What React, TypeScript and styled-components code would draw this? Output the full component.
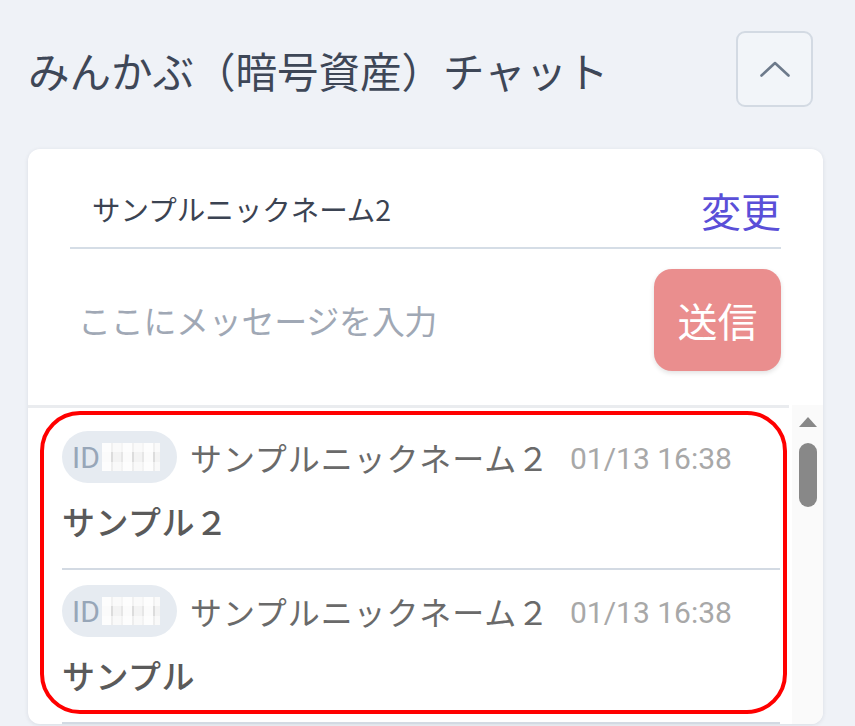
import React from "react";
import styled, { createGlobalStyle } from "styled-components";

const Global = createGlobalStyle`
  html, body { margin: 0; padding: 0; background: #eff2f7; overflow: hidden; }
  body { font-family: "Noto Sans CJK JP", "Noto Sans", sans-serif; }
`;

const Page = styled.div`
  padding: 31px 32px 0 28px;
  height: 726px;
  box-sizing: border-box;
`;

const Header = styled.div`
  display: flex;
  align-items: center;
  justify-content: space-between;
  height: 76px;
  padding-right: 10px;
`;

const Title = styled.h1`
  margin: 0;
  font-size: 41.5px;
  font-weight: 400;
  line-height: 1;
  color: #3e4757;
  padding-top: 4px;
`;

const CollapseButton = styled.button`
  width: 77px;
  height: 76px;
  box-sizing: border-box;
  border: 2px solid #d3dae3;
  border-radius: 9px;
  background: #f2f5f9;
  display: flex;
  align-items: center;
  justify-content: center;
  padding: 0;
`;

const Card = styled.div`
  margin-top: 42px;
  background: #ffffff;
  border-radius: 12px;
  box-shadow: 0 1px 4px rgba(30, 40, 60, 0.1);
  overflow: hidden;
`;

const NickRow = styled.div`
  display: flex;
  align-items: center;
  justify-content: space-between;
  height: 78px;
  padding: 20px 42px 0 42px;
`;

const NickName = styled.span`
  padding-left: 22px;
  font-size: 28.5px;
  color: #3b4352;
`;

const ChangeLink = styled.a`
  font-size: 40px;
  color: #5a4fd8;
  line-height: 1;
  margin-top: 4px;
`;

const Divider = styled.div`
  height: 2px;
  background: #d5dde6;
  margin: 0 42px;
`;

const InputRow = styled.div`
  display: flex;
  align-items: center;
  justify-content: space-between;
  margin: 0 42px;
  padding: 20px 0 34px 0;
`;

const Placeholder = styled.span`
  padding-left: 8px;
  font-size: 33px;
  color: #a0a8b5;
  letter-spacing: -0.3px;
`;

const SendButton = styled.button`
  width: 127px;
  height: 102px;
  border: none;
  border-radius: 18px;
  background: #ea8e8e;
  color: #ffffff;
  font-family: inherit;
  font-size: 40px;
  box-shadow: 0 2px 5px rgba(0, 0, 0, 0.12);
  padding: 0;
`;

const ListTopLine = styled.div`
  height: 3px;
  background: #eaecef;
  margin-right: 34px;
`;

const ListArea = styled.div`
  position: relative;
  display: flex;
`;

const Messages = styled.div`
  flex: 1;
  padding: 8px 12px 0 34px;
`;

const Item = styled.div`
  padding: 15px 0 25px 0;
  border-bottom: 2px solid #d3dae3;
`;

const ItemHeader = styled.div`
  display: flex;
  align-items: center;
  height: 52px;
`;

const IdBadge = styled.span`
  display: inline-flex;
  align-items: center;
  height: 52px;
  width: 115px;
  box-sizing: border-box;
  padding-left: 10px;
  border-radius: 26px;
  background: #e6ebf1;
  font-family: "Roboto", "Noto Sans", sans-serif;
  font-size: 30px;
  color: #97a6b8;
`;

const Masked = styled.span`
  display: inline-block;
  width: 58px;
  height: 28px;
  margin-left: 2px;
  background:
    linear-gradient(180deg, rgba(255,255,255,0.6) 0 9px, transparent 9px 19px, rgba(255,255,255,0.5) 19px),
    repeating-linear-gradient(90deg, #fbfbfb 0 9px, #dcdcdc 9px 11px, #f3f3f3 11px 19px, #e6e6e6 19px 21px);
`;

const Author = styled.span`
  margin-left: 13px;
  font-size: 32px;
  font-weight: 400;
  color: #6a6a6a;
  letter-spacing: 0.9px;
`;

const Time = styled.span`
  margin-left: 20px;
  font-family: "Roboto", "Noto Sans", sans-serif;
  font-size: 30px;
  color: #a8a8a8;
  padding-top: 2px;
`;

const Body = styled.div`
  margin-top: 16px;
  font-size: 33px;
  line-height: 44px;
  font-weight: 500;
  color: #5a5a5a;
  letter-spacing: 0.5px;
`;

const ScrollTrack = styled.div`
  width: 31px;
  background: #fafafa;
  display: flex;
  flex-direction: column;
  align-items: center;
  padding-top: 11px;
  margin-top: -3px;
`;

const Thumb = styled.div`
  margin-top: 15px;
  width: 18px;
  height: 64px;
  border-radius: 9px;
  background: #888888;
`;

const Highlight = styled.div`
  position: absolute;
  left: 12px;
  top: 3px;
  width: 747px;
  height: 303px;
  box-sizing: border-box;
  border: 4.5px solid #ff0000;
  border-radius: 40px;
  pointer-events: none;
`;

const messages = [
  { author: "サンプルニックネーム２", time: "01/13 16:38", text: "サンプル２" },
  { author: "サンプルニックネーム２", time: "01/13 16:38", text: "サンプル" },
];

export default function App() {
  return (
    <>
      <Global />
      <Page>
        <Header>
          <Title>みんかぶ（暗号資産）チャット</Title>
          <CollapseButton aria-label="折りたたむ">
            <svg width="30" height="16" viewBox="0 0 30 16">
              <polyline
                points="1.5,14.5 15,2 28.5,14.5"
                fill="none"
                stroke="#6d7a8b"
                strokeWidth="2.6"
                strokeLinecap="round"
                strokeLinejoin="round"
              />
            </svg>
          </CollapseButton>
        </Header>
        <Card>
          <NickRow>
            <NickName>サンプルニックネーム2</NickName>
            <ChangeLink>変更</ChangeLink>
          </NickRow>
          <Divider />
          <InputRow>
            <Placeholder>ここにメッセージを入力</Placeholder>
            <SendButton>送信</SendButton>
          </InputRow>
          <ListTopLine />
          <ListArea>
            <Messages>
              {messages.map((m, i) => (
                <Item key={i}>
                  <ItemHeader>
                    <IdBadge>
                      ID
                      <Masked />
                    </IdBadge>
                    <Author>{m.author}</Author>
                    <Time>{m.time}</Time>
                  </ItemHeader>
                  <Body>{m.text}</Body>
                </Item>
              ))}
            </Messages>
            <ScrollTrack>
              <svg width="20" height="12" viewBox="0 0 20 12">
                <path d="M10 1 L19 11 L1 11 Z" fill="#888888" />
              </svg>
              <Thumb />
            </ScrollTrack>
            <Highlight />
          </ListArea>
        </Card>
      </Page>
    </>
  );
}
